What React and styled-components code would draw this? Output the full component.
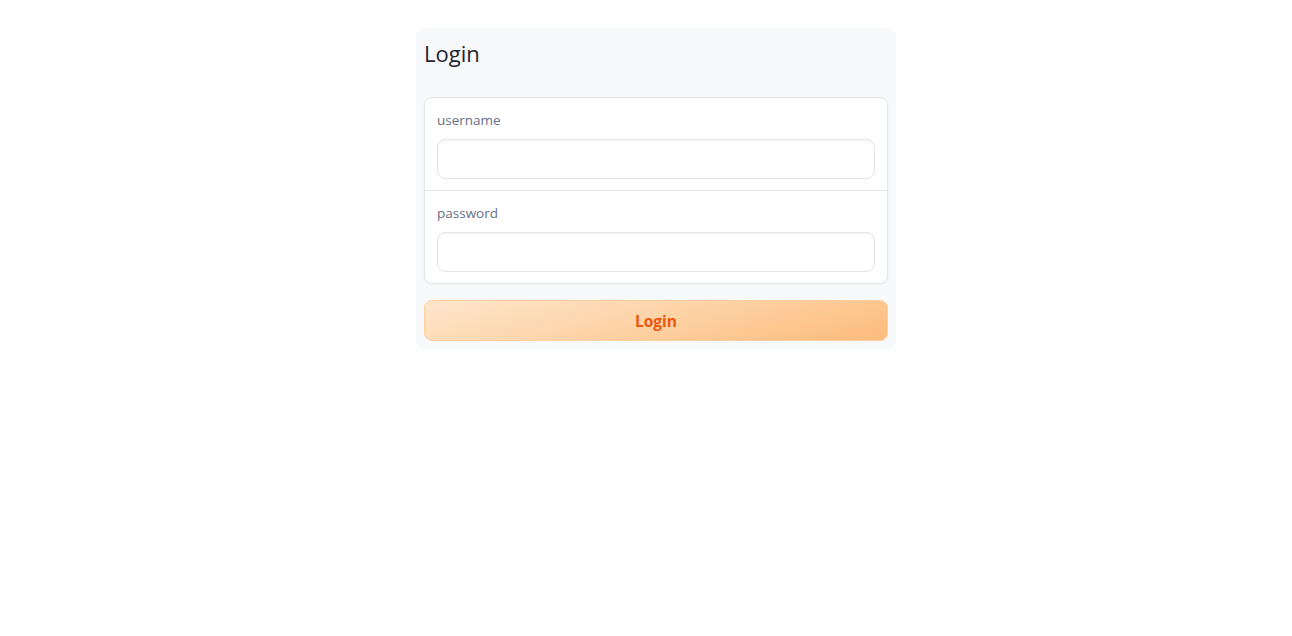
import React from 'react';
import styled, { createGlobalStyle } from 'styled-components';

const GlobalStyle = createGlobalStyle`
  * { box-sizing: border-box; }
  body {
    margin: 0;
    background: #ffffff;
    font-family: "Open Sans", "Noto Sans", sans-serif;
  }
`;

const Page = styled.main`
  padding-top: 28px;
`;

const Panel = styled.section`
  width: 480px;
  margin-left: 416px;
  padding: 8px;
  background: #f8f9fb;
  border-radius: 8px;
  display: flex;
  flex-direction: column;
`;

const Title = styled.h2`
  margin: 0 0 27px;
  font-size: 22px;
  line-height: 34px;
  font-weight: 400;
  color: #1f2430;
`;

const Card = styled.div`
  background: #ffffff;
  border: 1px solid #e3e5ea;
  border-radius: 8px;
  box-shadow: 0 1px 2px rgba(15, 23, 42, 0.04);
`;

const Field = styled.div`
  padding: 11px 12px;
  & + & {
    border-top: 1px solid #e3e5ea;
  }
`;

const Label = styled.label`
  display: block;
  font-size: 13.5px;
  line-height: 22px;
  margin-bottom: 8px;
  color: #667085;
`;

const Input = styled.input`
  display: block;
  width: 100%;
  height: 40px;
  border: 1px solid #e3e5ea;
  border-radius: 8px;
  background: #ffffff;
  box-shadow: inset 0 1px 3px rgba(15, 23, 42, 0.05);
  padding: 0 12px;
  font: inherit;
  font-size: 14px;
  outline: none;
`;

const Button = styled.button`
  margin-top: 16px;
  height: 41px;
  width: 100%;
  border: 1px solid #fdcf9f;
  border-radius: 8px;
  background: linear-gradient(165deg, #fee6cc 0%, #fdd2a5 50%, #fdbb7a 100%);
  color: #ea580c;
  font-family: inherit;
  font-size: 15.5px;
  font-weight: 700;
  cursor: pointer;
`;

export default function App() {
  return (
    <Page>
      <GlobalStyle />
      <Panel>
        <Title>Login</Title>
        <Card>
          <Field>
            <Label htmlFor="username">username</Label>
            <Input id="username" type="text" />
          </Field>
          <Field>
            <Label htmlFor="password">password</Label>
            <Input id="password" type="password" />
          </Field>
        </Card>
        <Button type="button">Login</Button>
      </Panel>
    </Page>
  );
}
